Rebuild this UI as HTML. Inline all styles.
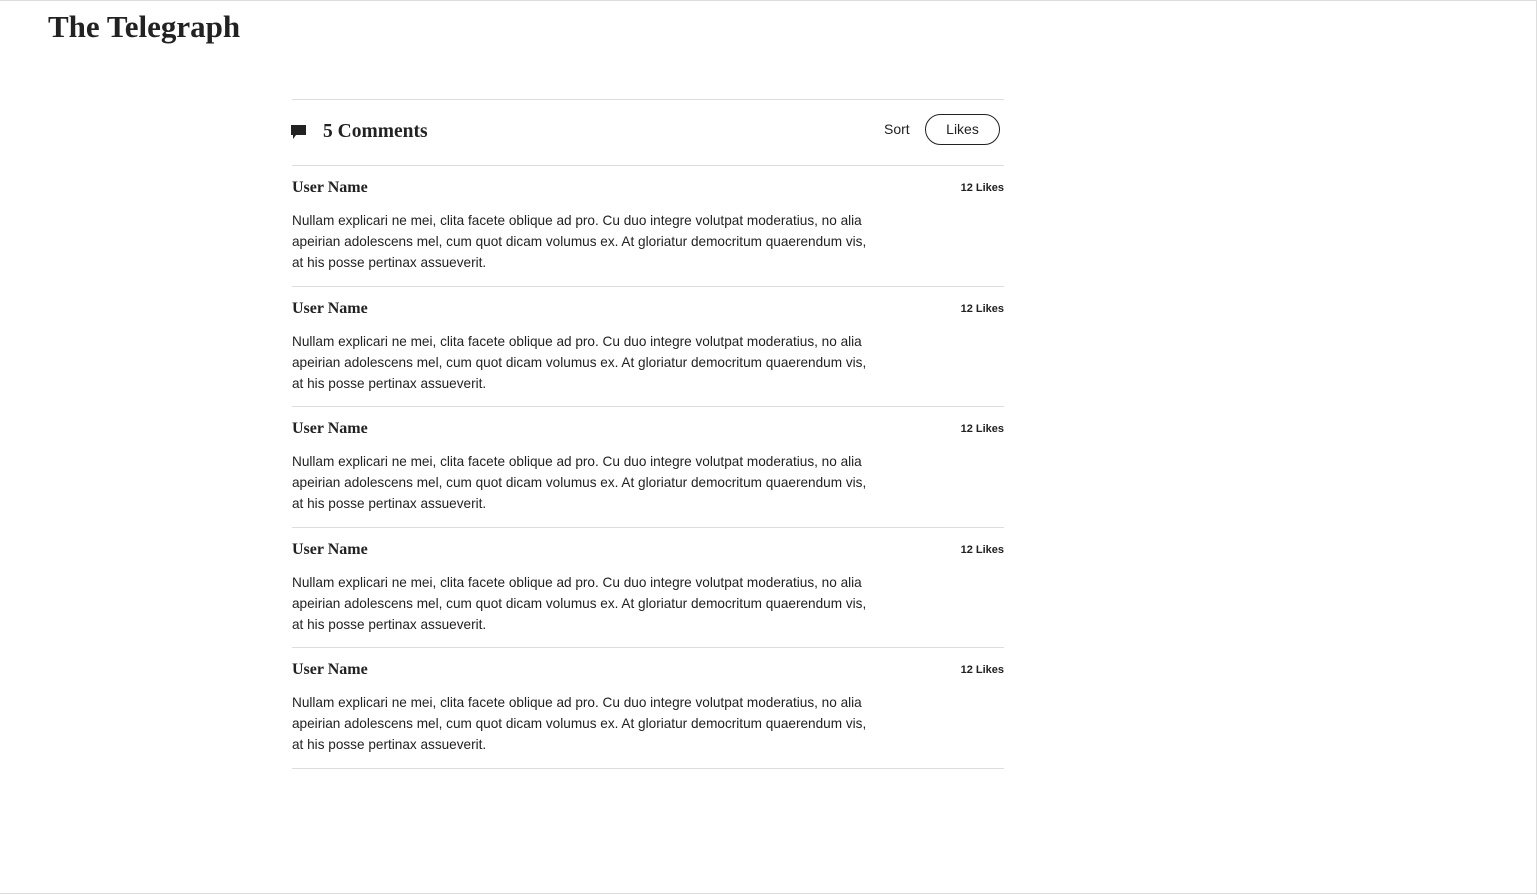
<!DOCTYPE html>
<html><head><meta charset="utf-8"><style>
html,body{margin:0;padding:0;background:#fff;}
body{width:1537px;height:894px;position:relative;overflow:hidden;border-top:1px solid #ddd;box-sizing:border-box;}
.edge{position:absolute;right:0;top:0;width:1px;height:894px;background:#ddd}
.bot{position:absolute;left:0;bottom:0;width:1537px;height:1px;background:#ddd}
.logo{position:absolute;left:48px;top:8px;font-family:"Liberation Serif",serif;font-weight:bold;font-size:31px;color:#222;letter-spacing:0px}
.wrap{position:absolute;left:292px;top:98px;width:712px}
.hdr{border-top:1px solid #ddd;height:65px;position:relative}
.icon{position:absolute;left:-2px;top:25px}
.title{position:absolute;left:31px;top:21px;font-family:"Liberation Serif",serif;font-weight:bold;font-size:19.5px;color:#222}
.sort{position:absolute;left:592px;top:21px;font-family:"Liberation Sans",sans-serif;font-size:14px;color:#222}
.pill{position:absolute;left:633px;top:14px;width:73px;height:29px;border:1.3px solid #222;border-radius:16px;text-align:center;line-height:29px;font-family:"Liberation Sans",sans-serif;font-size:14px;color:#222}
.c{border-top:1px solid #ddd;height:120.5px;box-sizing:border-box;position:relative}
.c:last-child{border-bottom:1px solid #ddd;height:121.5px}
.u{position:absolute;left:0;top:13px;font-family:"Liberation Serif",serif;font-weight:bold;font-size:16px;color:#222}
.l{position:absolute;right:0;top:16px;font-family:"Liberation Sans",sans-serif;font-size:11px;font-weight:bold;color:#222}
.t{position:absolute;left:0;top:44px;width:640px;white-space:nowrap;font-family:"Liberation Sans",sans-serif;font-size:13.6px;line-height:21px;color:#222}
</style></head><body>
<div class="edge"></div><div class="bot"></div>
<div class="logo">The Telegraph</div>
<div class="wrap">
<div class="hdr">
<svg class="icon" width="17" height="16" viewBox="0 0 17 16"><path d="M1 0h15v10H6l-3 4v-4H1z" fill="#222"/></svg>
<div class="title">5 Comments</div>
<div class="sort">Sort</div>
<div class="pill">Likes</div>
</div>
<div class="c"><div class="u">User Name</div><div class="l">12 Likes</div><div class="t">Nullam explicari ne mei, clita facete oblique ad pro. Cu duo integre volutpat moderatius, no alia<br>apeirian adolescens mel, cum quot dicam volumus ex. At gloriatur democritum quaerendum vis,<br>at his posse pertinax assueverit.</div></div>
<div class="c"><div class="u">User Name</div><div class="l">12 Likes</div><div class="t">Nullam explicari ne mei, clita facete oblique ad pro. Cu duo integre volutpat moderatius, no alia<br>apeirian adolescens mel, cum quot dicam volumus ex. At gloriatur democritum quaerendum vis,<br>at his posse pertinax assueverit.</div></div>
<div class="c"><div class="u">User Name</div><div class="l">12 Likes</div><div class="t">Nullam explicari ne mei, clita facete oblique ad pro. Cu duo integre volutpat moderatius, no alia<br>apeirian adolescens mel, cum quot dicam volumus ex. At gloriatur democritum quaerendum vis,<br>at his posse pertinax assueverit.</div></div>
<div class="c"><div class="u">User Name</div><div class="l">12 Likes</div><div class="t">Nullam explicari ne mei, clita facete oblique ad pro. Cu duo integre volutpat moderatius, no alia<br>apeirian adolescens mel, cum quot dicam volumus ex. At gloriatur democritum quaerendum vis,<br>at his posse pertinax assueverit.</div></div>
<div class="c"><div class="u">User Name</div><div class="l">12 Likes</div><div class="t">Nullam explicari ne mei, clita facete oblique ad pro. Cu duo integre volutpat moderatius, no alia<br>apeirian adolescens mel, cum quot dicam volumus ex. At gloriatur democritum quaerendum vis,<br>at his posse pertinax assueverit.</div></div>
</div>
</body></html>
